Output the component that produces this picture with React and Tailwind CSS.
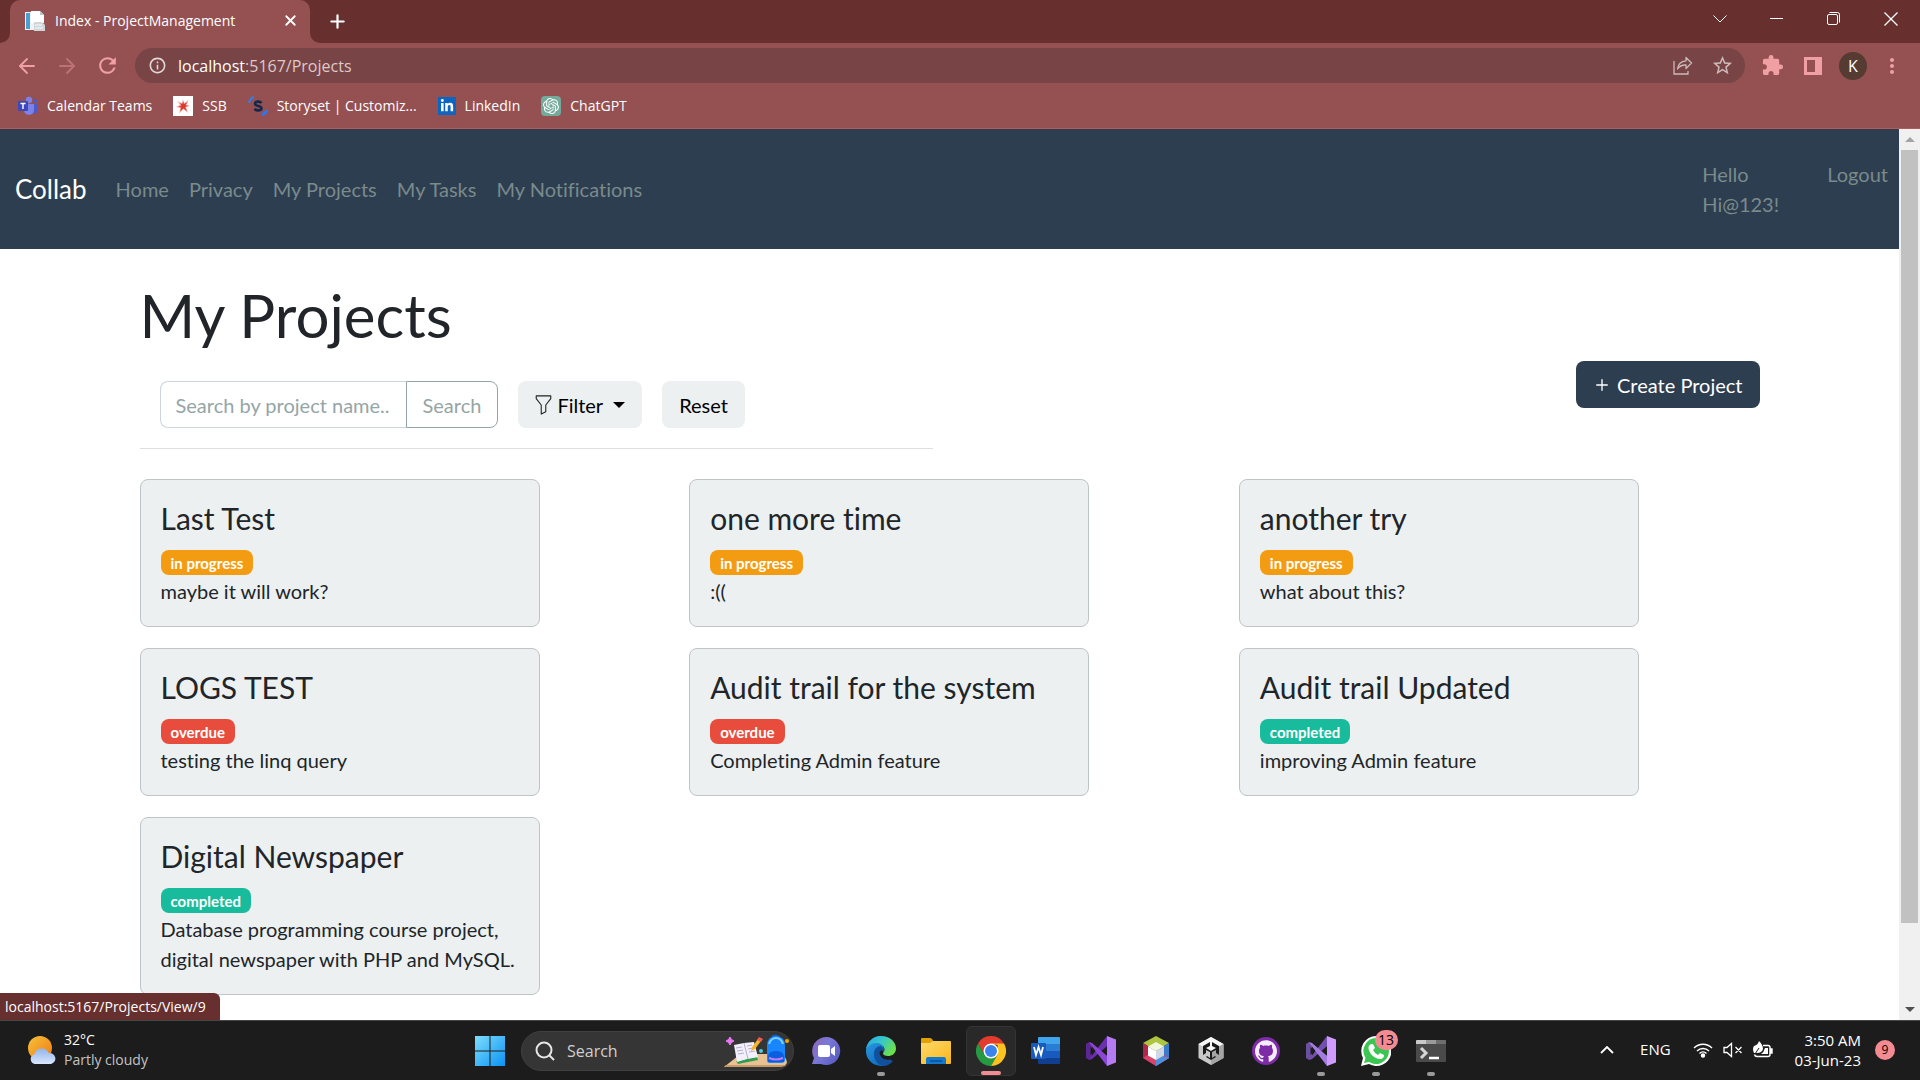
import React from "react";
import { ArrowLeft, ArrowRight, X, Plus } from "lucide-react";
import { SiOpenai, SiGithub } from "react-icons/si";
import { FaLinkedinIn } from "react-icons/fa";
import { MdExtension, MdStarBorder, MdRefresh, MdMoreVert, MdOutlineInfo } from "react-icons/md";

const UI = "font-['Segoe_UI','Open_Sans','Noto_Sans',sans-serif]";

const projects = [
  { title: "Last Test", status: "in progress", text: "maybe it will work?" },
  { title: "one more time", status: "in progress", text: ":((" },
  { title: "another try", status: "in progress", text: "what about this?" },
  { title: "LOGS TEST", status: "overdue", text: "testing the linq query" },
  { title: "Audit trail for the system", status: "overdue", text: "Completing Admin feature" },
  { title: "Audit trail Updated", status: "completed", text: "improving Admin feature" },
  {
    title: "Digital Newspaper",
    status: "completed",
    text: "Database programming course project, digital newspaper with PHP and MySQL.",
  },
];

const statusColor = {
  "in progress": "bg-[#f39c12]",
  overdue: "bg-[#e74c3c]",
  completed: "bg-[#18bc9c]",
};

function PageIcon() {
  return (
    <svg width="20" height="20" viewBox="0 0 20 20" aria-hidden="true">
      <rect x="0" y="1" width="16" height="18" fill="#eef2f4" />
      <rect x="1" y="2" width="4" height="16" fill="#4a9fd0" />
      <path d="M6 0h9l4 4v8H6z" fill="#fff" />
      <path d="M15 0v4h4z" fill="#b9c4cb" />
      <path d="M9 11h8l3 3v6H9z" fill="#cfd6da" />
      <path d="M10 14h7M10 17h8" stroke="#f8fafb" />
    </svg>
  );
}

function TeamsIcon() {
  return (
    <svg width="20" height="20" viewBox="0 0 20 20" aria-hidden="true">
      <circle cx="11" cy="4" r="3.2" fill="#7b83eb" />
      <circle cx="17" cy="5" r="2" fill="#5059c9" />
      <path d="M13 8h7v6a3.5 3.5 0 0 1-7 0z" fill="#5059c9" />
      <path d="M6 8h10v6a5 5 0 0 1-10 0z" fill="#7b83eb" />
      <rect x="0" y="5" width="10" height="10" rx="1" fill="#3f48b8" />
      <path d="M2.500 7.500h5M5 7.500v5.500" stroke="#fff" strokeWidth="1.400" />
    </svg>
  );
}

function StarburstIcon() {
  return (
    <svg width="20" height="20" viewBox="0 0 20 20" aria-hidden="true">
      <rect width="20" height="20" fill="#fff" />
      <path d="M10 3l1 4.500 5-4-3 5L17 10l-4 1 2 6-4.500-4L6 17.500l1.500-5.500L3 11l4-2L4.500 5 9 7.500z" fill="#f0a49c" />
      <path d="M10 5l1 3 3.500-2-2 3.200 2.500.8-3 1 2 4-3.500-2.500L7 15l1.200-3.500L5.500 10.500l3-1L7 7l2.500 1z" fill="#dc3a2e" />
    </svg>
  );
}

function StorysetIcon() {
  return (
    <svg width="20" height="20" viewBox="0 0 20 20" aria-hidden="true" fill="none">
      <path d="M1 7a8 8 0 0 1 5-6" stroke="#2f80ed" strokeWidth="2" />
      <path d="M19 14a8 8 0 0 1-5 5" stroke="#1f7bff" strokeWidth="2.500" />
      <path d="M13.500 7C12 5 7 5.200 7 7.700c0 3 6.500 1.600 6.500 4.600 0 2.500-5 2.800-7 .5" stroke="#14284b" strokeWidth="2.600" />
    </svg>
  );
}

function ShareIcon() {
  return (
    <svg width="20" height="20" viewBox="0 0 20 20" fill="none" stroke="#cdb9b9" strokeWidth="1.300" aria-hidden="true">
      <path d="M1 5v13h14v-3" />
      <path d="M13 1.500l5.500 5.500L13 12.500V9C9 8.800 6.500 10 4.500 13 5 8.500 8 5.200 13 4.800z" strokeLinejoin="round" />
    </svg>
  );
}

function FunnelIcon() {
  return (
    <svg width="17" height="20" viewBox="0 0 18 22" fill="none" stroke="#222" strokeWidth="1.200" strokeLinejoin="round" aria-hidden="true">
      <path d="M1 1h16v3l-5.500 7v7.500L6.500 21V11L1 4z" />
    </svg>
  );
}

function WeatherIcon() {
  return (
    <svg width="30" height="30" viewBox="0 0 30 30" aria-hidden="true">
      <defs>
        <linearGradient id="sun" x1="0" y1="0" x2="1" y2="1">
          <stop offset="0" stopColor="#f6c23a" />
          <stop offset="1" stopColor="#ef7a13" />
        </linearGradient>
        <linearGradient id="cloud" x1="0" y1="0" x2="0" y2="1">
          <stop offset="0" stopColor="#8fb4ee" />
          <stop offset="1" stopColor="#dbe7fb" />
        </linearGradient>
      </defs>
      <circle cx="14" cy="13" r="12" fill="url(#sun)" />
      <path d="M9 29a5 5 0 0 1-.5-9.800 7.500 7.500 0 0 1 14.200-1A5.400 5.400 0 0 1 25 29z" fill="url(#cloud)" />
    </svg>
  );
}

function StartIcon() {
  return (
    <svg width="30" height="30" viewBox="0 0 30 30" aria-hidden="true">
      <defs>
        <linearGradient id="win" x1="0" y1="0" x2="1" y2="1">
          <stop offset="0" stopColor="#7fdcfb" />
          <stop offset="1" stopColor="#0a93f5" />
        </linearGradient>
      </defs>
      <path d="M0 0h14.500v14.500H0zM15.500 0H30v14.500H15.500zM0 15.500h14.500V30H0zM15.500 15.500H30V30H15.500z" fill="url(#win)" />
    </svg>
  );
}

function SearchArt() {
  return (
    <svg width="70" height="34" viewBox="0 0 70 34" className="shrink-0" aria-hidden="true">
      <path d="M1 33l14-11q3-2 7-2h36q4 1 6 8 0 4-8 5z" fill="#e9c293" />
      <path d="M1 33l2-2h60q-2 2-8 2z" fill="#c89a68" />
      <path d="M7 3l1.500 2.500L11 7 8.500 8.500 7 11 5.500 8.500 3 7l2.500-1.500z" fill="#e77af0" stroke="#e77af0" />
      <path d="M13 27l21-4 1 3-20 4z" fill="#2f9e50" />
      <path d="M11 11l10-2 10-1 4 15-11 2-10 3z" fill="#f3f0fb" />
      <path d="M21 9l4 16M13 14l6-1M14 17l6-1M15 20l6-1M24 12l5-1M25 15l5-1M26 18l6-1" stroke="#b6acd0" />
      <path d="M29 13l6-8 3 2-6 8-4 2z" fill="#f6b52b" />
      <path d="M34 6l2-3 4 2-2 3z" fill="#f25a4b" />
      <circle cx="38" cy="17" r="2" fill="#4ecbe0" />
      <circle cx="64" cy="7" r="2" fill="#f5a800" />
      <path d="M49 3q3-3 7 0" stroke="#1260d0" strokeWidth="2" fill="none" />
      <path d="M44 12q0-10 9-10t9 10v14q0 3-4 3H47q-3 0-3-3z" fill="#1786ff" />
      <path d="M46 10q2-6 7-6t7 6" stroke="#7fd0ff" strokeWidth="2" fill="none" />
      <path d="M45 23q0-6 8-6t8 6v5H45z" fill="#0a5fe0" />
      <path d="M46 24q7 3 14 0" stroke="#c07cf5" strokeWidth="2" fill="none" />
    </svg>
  );
}

function ChatIcon() {
  return (
    <svg width="30" height="30" viewBox="0 0 30 30" aria-hidden="true">
      <defs>
        <linearGradient id="chat" x1="0" y1="0" x2="1" y2="0.6">
          <stop offset="0" stopColor="#8d62b5" />
          <stop offset="0.5" stopColor="#7a78d6" />
          <stop offset="1" stopColor="#5b5fc7" />
        </linearGradient>
      </defs>
      <path d="M15 1a14 14 0 1 1-5 27H1l2-6A14 14 0 0 1 15 1z" fill="url(#chat)" />
      <rect x="7" y="9" width="12" height="12" rx="2" fill="#fff" />
      <path d="M20 13l4-3v10l-4-3z" fill="#fff" />
    </svg>
  );
}

function EdgeIcon() {
  return (
    <svg width="30" height="30" viewBox="0 0 30 30" aria-hidden="true">
      <defs>
        <linearGradient id="edgeTop" x1="0" y1="0" x2="1" y2="0.5">
          <stop offset="0" stopColor="#2aa6e0" />
          <stop offset="0.5" stopColor="#35c5cf" />
          <stop offset="1" stopColor="#6be04d" />
        </linearGradient>
        <linearGradient id="edgeLeft" x1="0" y1="0" x2="0.6" y2="1">
          <stop offset="0" stopColor="#2ea0e8" />
          <stop offset="1" stopColor="#0f6fc0" />
        </linearGradient>
      </defs>
      <path d="M0 15a15 15 0 0 1 15-15l3 13v14l-1 3H15A15 15 0 0 1 0 15z" fill="url(#edgeLeft)" />
      <path d="M8 18c0-5 3-8 7-8l3 3v7l9 5c-3 3.500-6 4.800-9.500 5C12 29.500 8 24 8 18z" fill="#11509c" />
      <path d="M13.500 16c0 5 4.500 8.500 10 7.500 2-.3 3.500-1 4.500-1.500L24 20l-5-1-3-5z" fill="#1c1c1c" />
      <path d="M0 14C1 5 8 0 15 0c9 0 15 6 15 12.500 0 5-4 7.500-8 7.500-3 0-5-1.200-5-2.500 0-1 1.500-1.600 1.500-4C18.500 10 15 7 10.500 7 5 7 1 10.500 0 14z" fill="url(#edgeTop)" />
    </svg>
  );
}

function FolderIcon() {
  return (
    <svg width="30" height="30" viewBox="0 0 30 30" aria-hidden="true">
      <defs>
        <linearGradient id="folder" x1="0" y1="0" x2="1" y2="1">
          <stop offset="0" stopColor="#ffd96b" />
          <stop offset="1" stopColor="#f8b71c" />
        </linearGradient>
      </defs>
      <path d="M0 3q0-1 1-1h8q1 0 2 1l2 3v5H0z" fill="#e2a106" />
      <path d="M0 7h9l3-2h17q1 0 1 1v21q0 1-1 1H1q-1 0-1-1z" fill="url(#folder)" />
      <path d="M5 28v-5q0-2 2-2h16q2 0 2 2v5z" fill="#1478cf" />
      <path d="M9 25h12" stroke="#0b529a" strokeWidth="1.500" />
    </svg>
  );
}

function ChromeIcon() {
  return (
    <svg width="30" height="30" viewBox="0 0 30 30" aria-hidden="true">
      <path d="M2 7.500A15 15 0 0 1 28 7.500L15 9 8.500 18.800z" fill="#e33b2e" />
      <path d="M2 7.500A15 15 0 0 0 15 30l6.500-11.300-6.500 1-6.500-1z" fill="#269a42" />
      <path d="M28 7.500A15 15 0 0 1 15 30l6.500-11.300L21.500 9 15 7.500z" fill="#fcc31e" />
      <circle cx="15" cy="15" r="7.5" fill="#fff" />
      <circle cx="15" cy="15" r="6" fill="#3b82ee" />
    </svg>
  );
}

function WordIcon() {
  return (
    <svg width="30" height="30" viewBox="0 0 30 30" aria-hidden="true">
      <path d="M7 2q0-1 1-1h20q1 0 1 1v6H7z" fill="#41a5ee" />
      <path d="M7 8h22v7H7z" fill="#2b7cd3" />
      <path d="M7 15h22v7H7z" fill="#185abd" />
      <path d="M7 22h22v5q0 1-1 1H8q-1 0-1-1z" fill="#103f91" />
      <rect x="0" y="7" width="15" height="16" rx="1" fill="#185abd" />
      <path d="M3 11l2 8 2.500-8 2.500 8 2-8" fill="none" stroke="#fff" strokeWidth="1.800" />
    </svg>
  );
}

function VisualStudioIcon({ light }) {
  return (
    <svg width="30" height="30" viewBox="0 0 30 30" aria-hidden="true">
      <path d="M0 8l3-2 3 1v16l-3 1-3-2z" fill={light ? "#6b4fa0" : "#5d2596"} />
      <path d="M3 23.500L21 0l2 8.500L6 23z" fill={light ? "#7350ad" : "#6c2fb0"} />
      <path d="M3 6.500L21 30l2-8.500L6 7z" fill={light ? "#a47be0" : "#8b46d6"} />
      <path d="M21 0l9 3.500v23L21 30z" fill={light ? "#cf9bff" : "#b57bf2"} />
      <path d="M4.500 11v8l4-4z" fill="#1c1c1c" />
    </svg>
  );
}

function CubeIcon() {
  return (
    <svg width="30" height="30" viewBox="0 0 30 30" aria-hidden="true">
      <path d="M15 0l13 7-13 8L2 7z" fill="#aec53f" />
      <path d="M2 7l13 8v15L2 22z" fill="#b3264c" />
      <path d="M28 7l-13 8v15l13-8z" fill="#3a7cc9" />
      <path d="M2 22l13-8 13 8-13 8z" fill="#d8436b" />
      <path d="M15 18l13 4-13 8z" fill="#4a90de" />
      <path d="M15 6l8 4.500-8 4.500-8-4.500z" fill="#f2f6dc" />
      <path d="M7 10.500l8 4.500v9l-8-4.500z" fill="#fff" />
      <path d="M23 10.500L15 15v9l8-4.500z" fill="#cfd9e6" />
    </svg>
  );
}

function UnityIcon() {
  return (
    <svg width="30" height="30" viewBox="0 0 30 30" aria-hidden="true">
      <path d="M15 1l12.500 7v14L15 29 2.500 22V8z" fill="#c9c9c9" />
      <path d="M15 1l12.500 7L15 15 2.500 8z" fill="#f7f7f7" />
      <path d="M15 15l12.500-7v14L15 29z" fill="#a5a5a5" />
      <path d="M14 6v4l-4 2 5 3 5-3-4-2V6l7 4v9l-3-2v-3l-4 2v6l3-2 1 1-5 3-5-3 1-1 3 2v-6l-4-2v3l-3 2v-9z" fill="#1a1a1a" />
    </svg>
  );
}

function GithubIcon() {
  return (
    <span className="flex size-7 items-center justify-center rounded-full bg-[#7d2ba6]">
      <SiGithub className="size-[22px] text-[#f4ecf8]" />
    </span>
  );
}

function WhatsappIcon() {
  return (
    <span className="relative">
      <svg width="30" height="30" viewBox="0 0 30 30" aria-hidden="true">
        <path d="M15 0a15 15 0 1 1-7 28L0 30l2-8A15 15 0 0 1 15 0z" fill="#fff" />
        <path d="M15 2a13 13 0 1 1-7 24l-5 1 1.500-5A13 13 0 0 1 15 2z" fill="#3cc552" />
        <path d="M10 8h2l2 4-2 2q2 4 5 5l2-2 4 2q0 4-4 4C13 23 7 16 7.500 11q.5-2 2.500-3z" fill="#fff" />
      </svg>
      <span className="absolute -top-[6px] left-[14px] flex h-5 w-[23px] items-center justify-center rounded-full bg-[#f48a92] text-sm text-black">
        13
      </span>
    </span>
  );
}

function TerminalIcon() {
  return (
    <svg width="30" height="30" viewBox="0 0 30 30" aria-hidden="true">
      <rect x="0" y="4" width="30" height="22" rx="1" fill="#4a4a4a" />
      <path d="M0 8V5q0-1 1-1h9v4z" fill="#c9c9c9" />
      <path d="M10 4h10v4H10z" fill="#9a9a9a" />
      <path d="M20 4h9q1 0 1 1v3H20z" fill="#6d6d6d" />
      <path d="M5 12l5 5-5 5" fill="none" stroke="#d6d6d6" strokeWidth="3" />
      <path d="M13 22h10" stroke="#fff" strokeWidth="2.500" />
    </svg>
  );
}

const apps = [
  { name: "Chat", icon: <ChatIcon /> },
  { name: "Edge", icon: <EdgeIcon />, running: true },
  { name: "File Explorer", icon: <FolderIcon /> },
  { name: "Chrome", icon: <ChromeIcon />, active: true },
  { name: "Word", icon: <WordIcon /> },
  { name: "Visual Studio", icon: <VisualStudioIcon /> },
  { name: "NetBeans", icon: <CubeIcon /> },
  { name: "Unity Hub", icon: <UnityIcon /> },
  { name: "GitHub Desktop", icon: <GithubIcon /> },
  { name: "Visual Studio 2022", icon: <VisualStudioIcon light />, running: true },
  { name: "WhatsApp", icon: <WhatsappIcon />, running: true },
  { name: "Terminal", icon: <TerminalIcon />, running: true },
];

function TabStrip() {
  return (
    <div className="flex h-[43px] items-stretch bg-[#67302f] text-white">
      <div className="flex w-[10px] shrink-0 items-end bg-[#955152]">
        <div className="h-full w-full rounded-br-[10px] bg-[#67302f]" />
      </div>
      <div className="flex w-[300px] items-center rounded-t-[10px] bg-[#955152] pr-[10px] pb-[2px] pl-[15px]">
        <PageIcon />
        <span className="ml-[10px] flex-1 text-sm whitespace-nowrap">Index - ProjectManagement</span>
        <button aria-label="Close tab" className="flex size-5 items-center justify-center">
          <X size={17} strokeWidth={2.5} />
        </button>
      </div>
      <div className="flex flex-1 bg-[#955152]">
        <div className="flex h-full w-full items-center justify-between rounded-bl-[10px] bg-[#67302f]">
          <button aria-label="New tab" className="ml-[15px] flex size-6 items-center justify-center">
            <Plus size={21} strokeWidth={2.5} />
          </button>
          <div className="flex h-full items-center pb-[6px]">
            <button aria-label="Search tabs" className="flex w-[57px] justify-center">
              <svg width="14" height="8" viewBox="0 0 14 8" fill="none" stroke="#fff"><path d="M.5.5L7 7 13.500.5" /></svg>
            </button>
            <button aria-label="Minimize" className="flex w-[57px] justify-center">
              <svg width="13" height="1" viewBox="0 0 13 1"><path d="M0 0h13v1H0z" fill="#fff" /></svg>
            </button>
            <button aria-label="Restore" className="flex w-[57px] justify-center">
              <svg width="13" height="13" viewBox="0 0 13 13" fill="none" stroke="#fff">
                <rect x=".5" y="2.5" width="10" height="10" rx="1.5" />
                <path d="M2.500.5h8q2 0 2 2v8" />
              </svg>
            </button>
            <button aria-label="Close window" className="flex w-[58px] justify-center">
              <svg width="14" height="14" viewBox="0 0 14 14" fill="none" stroke="#fff" strokeWidth="1.300"><path d="M.5.5l13 13M13.500.5l-13 13" /></svg>
            </button>
          </div>
        </div>
      </div>
    </div>
  );
}

function Toolbar() {
  return (
    <div className="flex h-[45px] items-center bg-[#955152] pr-4 pl-[15px] text-[#f0a0a2]">
      <div className="flex w-[120px] items-center gap-4">
        <button aria-label="Back"><ArrowLeft size={24} strokeWidth={1.8} /></button>
        <button aria-label="Forward" className="text-[#bd7376]"><ArrowRight size={24} strokeWidth={1.8} /></button>
        <button aria-label="Reload"><MdRefresh size={25} /></button>
      </div>
      <form className="flex h-[35px] flex-1 items-center rounded-full bg-[#784445] pr-[11px] pl-[13px]" onSubmit={(e) => e.preventDefault()}>
        <MdOutlineInfo size={19} className="text-[#e3d8d8]" />
        <a href="#projects" className="ml-[11px] flex-1 text-base text-[#dfc9c9]">
          <span className="text-white">localhost</span>:5167/Projects
        </a>
        <button type="button" aria-label="Share"><ShareIcon /></button>
        <button type="button" aria-label="Bookmark" className="ml-[18px]"><MdStarBorder size={23} className="text-[#cdb9b9]" /></button>
      </form>
      <div className="flex items-center">
        <button aria-label="Extensions" className="ml-4"><MdExtension size={23} /></button>
        <button aria-label="Side panel" className="ml-5">
          <svg width="18" height="18" viewBox="0 0 18 18" fill="none"><path d="M0 0h18v18H0zM3 3v12h8V3z" fill="#f0a0a2" fillRule="evenodd" /></svg>
        </button>
        <button aria-label="Profile" className="ml-[17px] flex size-7 items-center justify-center rounded-full bg-[#553b31] text-base text-white">K</button>
        <button aria-label="Menu" className="ml-[13px]"><MdMoreVert size={24} /></button>
      </div>
    </div>
  );
}

function Bookmark({ icon, children }) {
  return (
    <a href="#bookmark" className="flex items-center gap-[9px] whitespace-nowrap">
      {icon}
      {children}
    </a>
  );
}

function Bookmarks() {
  return (
    <nav aria-label="Bookmarks" className="flex h-[41px] items-center gap-[21px] border-b border-[#b05c5a] bg-[#955152] pb-1 pl-[18px] text-sm text-white">
      <Bookmark icon={<TeamsIcon />}>Calendar Teams</Bookmark>
      <Bookmark icon={<StarburstIcon />}>SSB</Bookmark>
      <Bookmark icon={<StorysetIcon />}>Storyset | Customiz...</Bookmark>
      <Bookmark icon={<span className="flex size-[18px] items-center justify-center bg-[#0a66c2]"><FaLinkedinIn size={14} /></span>}>LinkedIn</Bookmark>
      <Bookmark icon={<span className="flex size-5 items-center justify-center rounded-sm bg-[#74aa9c]"><SiOpenai size={16} /></span>}>ChatGPT</Bookmark>
    </nav>
  );
}

function SiteNav() {
  return (
    <header className="flex min-h-[120px] items-center bg-[#2c3e50] pr-[11px] pl-[15px] text-[#7b8a8b]">
      <a href="#home" className="text-[26px] text-white">Collab</a>
      <nav className="ml-[29px] flex flex-1 gap-5">
        <a href="#home">Home</a>
        <a href="#privacy">Privacy</a>
        <a href="#projects">My Projects</a>
        <a href="#tasks">My Tasks</a>
        <a href="#notifications">My Notifications</a>
      </nav>
      <div className="flex items-start">
        <a href="#account" className="w-[125px]">Hello Hi@123!</a>
        <button>Logout</button>
      </div>
    </header>
  );
}

function ProjectCard({ title, status, text }) {
  return (
    <a href="#view" className="block w-[400px] rounded-lg border border-[#bfc4c6] bg-[#ecf0f1] p-5">
      <h2 className="mb-[14px] text-[30px] leading-9">{title}</h2>
      <div className="flex h-[26px]">
        <span className={"flex h-[25px] items-center rounded-lg px-[10px] text-[15px] font-bold text-white " + statusColor[status]}>{status}</span>
      </div>
      <p>{text}</p>
    </a>
  );
}

function ProjectsPage() {
  return (
    <main className="mx-auto w-full max-w-[1650px] px-[15px] pt-[30px]">
      <h1 className="mb-[2px] text-[60px] leading-[72px]">My Projects</h1>
      <div className="flex items-start justify-between">
        <div className="w-[49%] border-b border-[#dcdfe2] px-5 pt-7 pb-5">
          <form className="flex gap-5" onSubmit={(e) => e.preventDefault()}>
            <div className="flex">
              <input
                aria-label="Search by project name"
                placeholder="Search by project name.."
                className="h-[47px] w-[246px] rounded-l-lg border border-r-0 border-[#ced4da] px-[15px] placeholder:text-[#95a5a6]"
              />
              <button className="h-[47px] rounded-r-lg border border-[#95a5a6] px-4 text-[#95a5a6]">Search</button>
            </div>
            <button type="button" className="flex h-[47px] items-center rounded-lg bg-[#ecf0f1] px-[17px] text-black">
              <span className="mr-[5px]"><FunnelIcon /></span>
              Filter
              <svg width="12" height="6" viewBox="0 0 12 6" className="ml-[10px]" aria-hidden="true"><path d="M0 0h12L6 6z" /></svg>
            </button>
            <button type="reset" className="h-[47px] rounded-lg bg-[#ecf0f1] px-[17px] text-black">Reset</button>
          </form>
        </div>
        <button className="mt-2 flex h-[47px] items-center rounded-lg bg-[#2c3e50] px-[17px] text-white">
          <Plus size={18} strokeWidth={1.8} className="mr-[6px]" />
          Create Project
        </button>
      </div>
      <div className="-mr-[29px] mt-[30px] grid grid-cols-3 items-start gap-y-[21px]">
        {projects.map((p) => (
          <ProjectCard key={p.title} {...p} />
        ))}
      </div>
    </main>
  );
}

function ScrollBar() {
  return (
    <div className="flex w-[21px] shrink-0 flex-col items-center bg-[#f0f0f0]">
      <div className="flex h-[21px] items-center justify-center">
        <svg width="10" height="5" viewBox="0 0 10 5"><path d="M0 5h10L5 0z" fill="#a3a3a3" /></svg>
      </div>
      <div className="min-h-0 w-[17px] flex-1">
        <div className="h-[91%] bg-[#c1c1c1]" />
      </div>
      <div className="flex h-[21px] items-center justify-center">
        <svg width="10" height="5" viewBox="0 0 10 5"><path d="M0 0h10L5 5z" fill="#505050" /></svg>
      </div>
    </div>
  );
}

function Taskbar() {
  return (
    <footer className="grid h-[60px] shrink-0 grid-cols-[1fr_auto_1fr] items-center border-t border-[#474747] bg-[#1c1c1c] text-[15px] text-white">
      <div className="flex items-center gap-2 pb-[2px] pl-[26px]">
        <WeatherIcon />
        <div className="text-sm leading-5">
          <div>32°C</div>
          <div className="text-[#c3c3c3]">Partly cloudy</div>
        </div>
      </div>
      <div className="flex h-full items-center">
        <button aria-label="Start" className="flex w-[55px] justify-center"><StartIcon /></button>
        <label className="mx-1 flex h-10 w-[273px] items-center overflow-hidden rounded-full border border-[#404040] bg-[#353535] pl-[13px]">
          <svg width="20" height="20" viewBox="0 0 20 20" fill="none" stroke="#e6e6e6" strokeWidth="2" aria-hidden="true"><circle cx="9" cy="9" r="7.5" /><path d="M14 14l5 5" /></svg>
          <input aria-label="Search" placeholder="Search" className="ml-3 w-0 min-w-0 flex-1 text-base placeholder:text-[#cfcfcf]" />
          <SearchArt />
        </label>
        {apps.map((a) => (
          <button key={a.name} aria-label={a.name} className="flex h-full w-[55px] items-center justify-center">
            <span className={"relative flex size-[50px] items-center justify-center rounded-md " + (a.active ? "border border-[#343434] bg-[#292929]" : "")}>
              {a.icon}
              {a.active && <span className="absolute bottom-0 h-1 w-5 rounded-full bg-[#f48a92]" />}
              {a.running && <span className="absolute bottom-0 h-1 w-2 rounded-full bg-[#9a9a9a]" />}
            </span>
          </button>
        ))}
      </div>
      <div className="flex items-center justify-end pr-[25px] pb-[2px]">
        <svg width="14" height="8" viewBox="0 0 14 8" fill="none" stroke="#fff" strokeWidth="1.800" aria-hidden="true"><path d="M1 7l6-6 6 6" /></svg>
        <span className="ml-[26px]">ENG</span>
        <svg width="20" height="16" viewBox="0 0 20 16" fill="none" stroke="#fff" strokeWidth="1.400" className="ml-[22px]" aria-hidden="true">
          <path d="M1 6a12.700 12.700 0 0 1 18 0M4 9a8.500 8.500 0 0 1 12 0M6.500 11.500a5 5 0 0 1 7 0" />
          <circle cx="10" cy="13.5" r="1.5" fill="#fff" />
        </svg>
        <svg width="20" height="16" viewBox="0 0 20 16" fill="none" stroke="#fff" strokeWidth="1.300" className="ml-[10px]" aria-hidden="true">
          <path d="M1 5.500h3L8.500 1.500v13L4 10.500H1zM12.500 5l6 6M18.500 5l-6 6" />
        </svg>
        <svg width="20" height="18" viewBox="0 0 20 18" fill="none" stroke="#fff" strokeWidth="1.400" className="ml-[10px]" aria-hidden="true">
          <path d="M10 4.500h5q2 0 2 2v7q0 2-2 2H4q-2 0-2.500-2" />
          <path d="M17.500 8h1.500v4h-1.500z" fill="#fff" />
          <path d="M12 7h3v6H8q3-2 4-6z" fill="#fff" stroke="none" />
          <path d="M6 0q4 4 4 8-1 4-6 4H1q-2-4 0-7 4-1 5-5z" fill="#fff" stroke="none" />
          <path d="M2 13l4-6" stroke="#1c1c1c" strokeWidth="1" />
        </svg>
        <div className="ml-[22px] text-right leading-5">
          <div>3:50 AM</div>
          <div>03-Jun-23</div>
        </div>
        <span className="ml-[14px] flex size-5 items-center justify-center rounded-full bg-[#f48a92] text-xs text-black">9</span>
      </div>
    </footer>
  );
}

export default function App() {
  return (
    <div className={"flex h-screen flex-col overflow-hidden bg-white " + UI}>
      <TabStrip />
      <Toolbar />
      <Bookmarks />
      <div className="relative flex min-h-0 flex-1">
        <div className="min-w-0 flex-1 overflow-hidden font-[Lato,sans-serif] text-[20px] leading-[30px] text-[#212529] [font-variant-ligatures:no-common-ligatures]">
          <SiteNav />
          <ProjectsPage />
        </div>
        <ScrollBar />
        <div className="absolute bottom-0 left-0 flex h-[27px] items-center rounded-tr-md bg-[#67302f] pr-[14px] pl-[5px] text-sm text-white">
          localhost:5167/Projects/View/9
        </div>
      </div>
      <Taskbar />
    </div>
  );
}
